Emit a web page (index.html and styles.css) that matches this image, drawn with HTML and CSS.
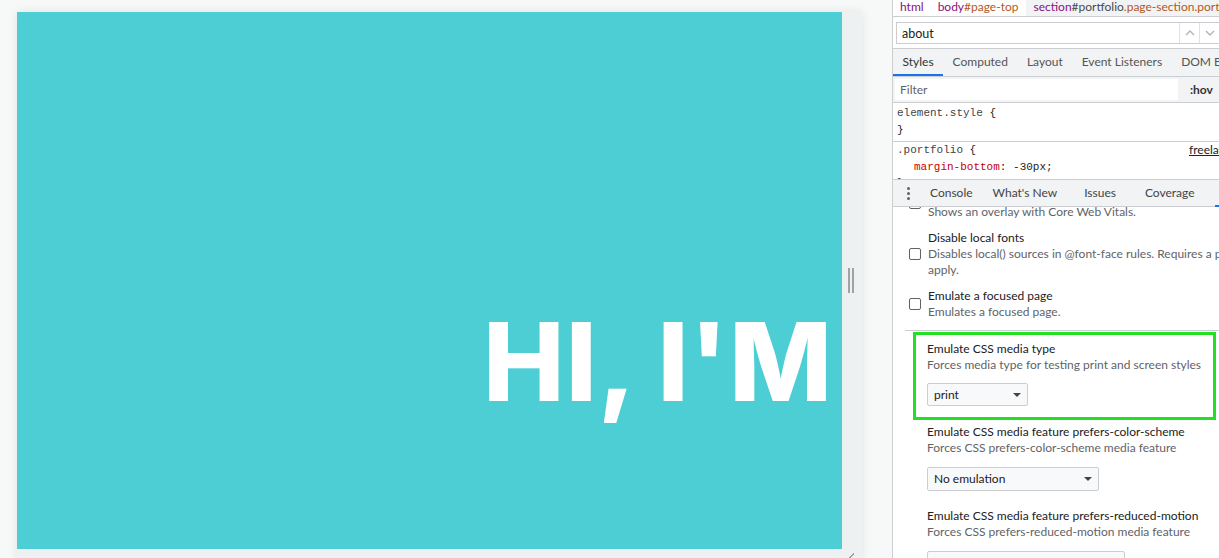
FILE: index.html
```html
<!DOCTYPE html>
<html>
<head>
<meta charset="utf-8">
<link rel="stylesheet" href="styles.css">
</head>
<body>
<div class="app">
  <div class="viewport">
    <div class="device">
      <div class="device-main">
        <div class="page"><h1 class="hero">HI, I'M</h1></div>
        <div class="side-strip"><span class="grip"></span></div>
      </div>
      <div class="bottom-strip"><span class="corner"></span></div>
    </div>
  </div>
  <div class="devtools">
    <div class="crumbs">
      <span class="crumb first"><span class="tag">html</span></span>
      <span class="crumb second"><span class="tag">body</span><span class="idn">#page-top</span></span>
      <span class="crumb selected"><span class="tag">section</span><span class="idsel">#portfolio</span><span class="cls">.page-section.portfolio</span></span>
    </div>
    <div class="search-row">
      <div class="search-box">
        <span class="search-text">about</span>
        <span class="search-btn"><svg width="10" height="6" viewBox="0 0 10 6"><path d="M1 5 L5 1 L9 5" fill="none" stroke="#b0b3b8" stroke-width="1.4"/></svg></span>
        <span class="search-btn"><svg width="10" height="6" viewBox="0 0 10 6"><path d="M1 1 L5 5 L9 1" fill="none" stroke="#b0b3b8" stroke-width="1.4"/></svg></span>
      </div>
    </div>
    <div class="tabs">
      <span class="tab active">Styles</span>
      <span class="tab">Computed</span>
      <span class="tab">Layout</span>
      <span class="tab">Event Listeners</span>
      <span class="tab">DOM Breakpoints</span>
    </div>
    <div class="filter-row">
      <div class="filter-box">Filter</div>
      <span class="hov">:hov</span>
    </div>
    <div class="rule">
      <div class="code"><span class="sel">element.style</span> {</div>
      <div class="code">}</div>
    </div>
    <div class="rule rule-cut">
      <div class="code rule-head"><span><span class="sel">.portfolio</span> {</span><span class="src">freelancer.css</span></div>
      <div class="code indent"><span class="prop">margin-bottom</span>: -30px;</div>
      <div class="code">}</div>
    </div>
    <div class="drawer-bar">
      <span class="kebab"><i></i><i></i><i></i></span>
      <span class="dtab t-console">Console</span>
      <span class="dtab t-new">What's New</span>
      <span class="dtab t-issues">Issues</span>
      <span class="dtab t-coverage">Coverage</span>
      <span class="dtab-active"></span>
    </div>
    <div class="rendering">
      <div class="opt opt-cut">
        <span class="check check-cut"></span>
        <div class="opt-text">
          <div class="desc">Shows an overlay with Core Web Vitals.</div>
        </div>
      </div>
      <div class="opt">
        <span class="check"></span>
        <div class="opt-text">
          <div class="title">Disable local fonts</div>
          <div class="desc">Disables local() sources in @font-face rules. Requires a page reload to<br>apply.</div>
        </div>
      </div>
      <div class="opt">
        <span class="check"></span>
        <div class="opt-text">
          <div class="title">Emulate a focused page</div>
          <div class="desc">Emulates a focused page.</div>
        </div>
      </div>
      <div class="divider"></div>
      <div class="media first-media">
        <div class="title">Emulate CSS media type</div>
        <div class="desc">Forces media type for testing print and screen styles</div>
        <div class="select sel-print">print<span class="arrow"></span></div>
        <div class="highlight"></div>
      </div>
      <div class="media">
        <div class="title">Emulate CSS media feature prefers-color-scheme</div>
        <div class="desc">Forces CSS prefers-color-scheme media feature</div>
        <div class="select sel-scheme">No emulation<span class="arrow"></span></div>
      </div>
      <div class="media">
        <div class="title">Emulate CSS media feature prefers-reduced-motion</div>
        <div class="desc">Forces CSS prefers-reduced-motion media feature</div>
        <div class="select sel-motion">No emulation<span class="arrow"></span></div>
      </div>
    </div>
  </div>
</div>
</body>
</html>
```

FILE: styles.css
```css
* { box-sizing: border-box; }
html, body { margin: 0; padding: 0; }
body {
  width: 1219px;
  height: 558px;
  overflow: hidden;
  font-family: "Lato", "Noto Sans", sans-serif;
  font-size: 12px;
  color: #202124;
}
.app {
  display: flex;
  width: 1219px;
  height: 558px;
  overflow: hidden;
}
.viewport {
  width: 893px;
  flex: none;
  height: 558px;
  background: #f7f8f8;
  border-right: 1px solid #cbcdd1;
  padding: 12px 0 0 17px;
  overflow: hidden;
}
.device {
  width: 845px;
  box-shadow: 0 0 10px rgba(0, 0, 0, 0.09);
  background: #eef1f2;
}
.device-main {
  display: flex;
}
.page {
  width: 825px;
  height: 537px;
  background: #4dced4;
  overflow: hidden;
  padding-top: 295px;
}
.hero {
  margin: 0;
  font-family: "Inter", "Inter Variable", "Noto Sans", sans-serif;
  font-weight: 800;
  font-size: 109px;
  line-height: 1;
  letter-spacing: 1px;
  color: #fff;
  text-align: right;
  padding-right: 9px;
  white-space: nowrap;
}
.side-strip {
  width: 20px;
  height: 537px;
  display: flex;
  justify-content: center;
  padding-top: 256px;
}
.grip {
  width: 6px;
  height: 25px;
  border-left: 2px solid #a0a3a6;
  border-right: 2px solid #a0a3a6;
  margin-left: -2px;
}
.bottom-strip {
  height: 12px;
  display: flex;
  justify-content: flex-end;
  padding: 4px 8px 0 0;
}
.corner {
  width: 6px;
  height: 6px;
  background: linear-gradient(135deg, transparent 45%, #9aa0a6 45%, #9aa0a6 60%, transparent 60%);
}

/* devtools */
.devtools {
  flex: 1;
  min-width: 0;
  height: 558px;
  background: #fff;
  overflow: hidden;
  white-space: nowrap;
}
.crumbs {
  height: 17px;
  border-bottom: 1px solid #cbcdd1;
  display: flex;
  align-items: stretch;
  line-height: 14px;
  font-size: 12px;
}
.crumb {
  padding: 0 8px;
}
.crumb.first { padding-left: 7px; }
.crumb.second { padding-left: 6px; }
.crumb.selected {
  background: #f1f3f4;
  padding-left: 7px;
  flex: 1;
}
.tag { color: #881280; }
.idn { color: #b4581c; }
.idsel { color: #4a4a4a; }
.cls { color: #b4581c; }
.search-row {
  height: 32px;
  border-bottom: 1px solid #cbcdd1;
  padding: 5px 0 0 3px;
}
.search-box {
  height: 22px;
  border: 1px solid #cbcdd1;
  border-right: none;
  display: flex;
  align-items: center;
  padding-left: 5px;
  font-size: 12.5px;
}
.search-text { flex: 1; }
.search-btn {
  width: 20px;
  height: 20px;
  border-left: 1px solid #e0e2e5;
  display: flex;
  align-items: center;
  justify-content: center;
}
.tabs {
  height: 28px;
  background: #f1f3f4;
  border-bottom: 1px solid #cbcdd1;
  display: flex;
}
.tab {
  padding: 0 9.5px;
  line-height: 26px;
  color: #555;
  border-bottom: 2px solid transparent;
}
.tab.active {
  color: #333;
  border-bottom-color: #1a73e8;
}
.filter-row {
  height: 26px;
  background: #f1f3f4;
  border-bottom: 1px solid #cbcdd1;
  display: flex;
  align-items: center;
  padding: 0 0 1px 2px;
}
.filter-box {
  width: 283px;
  height: 21px;
  background: #fff;
  line-height: 21px;
  padding-left: 5px;
  color: #5f6368;
}
.hov {
  margin-left: 12px;
  font-weight: 700;
  color: #333;
}
.rule {
  border-bottom: 1px solid #cbcdd1;
  padding: 2px 0 3px 4px;
}
.rule-cut {
  height: 37px;
  overflow: hidden;
  border-bottom: none;
  padding-top: 0px;
}
.code {
  font-family: "Liberation Mono", "DejaVu Sans Mono", monospace;
  font-size: 11px;
  line-height: 16.5px;
  color: #222;
}
.sel { color: #444; }
.rule-head {
  display: flex;
  justify-content: space-between;
}
.src {
  text-decoration: underline;
  color: #222;
  margin-right: -80px;
  width: 110px;
  font-family: "Lato", sans-serif;
  font-size: 12px;
}
.indent { padding-left: 17px; }
.prop { color: #c80000; }
.drawer-bar {
  height: 28px;
  background: #f1f3f4;
  border-top: 1px solid #cbcdd1;
  border-bottom: 1px solid #cbcdd1;
  display: flex;
  align-items: center;
  position: relative;
}
.kebab {
  width: 16px;
  margin-left: 14px;
  display: flex;
  flex-direction: column;
  gap: 2px;
}
.kebab i {
  width: 3px;
  height: 3px;
  background: #5f6368;
  border-radius: 50%;
}
.dtab {
  color: #444;
  line-height: 22px;
}
.t-console { margin-left: 7px; }
.t-new { margin-left: 20px; }
.t-issues { margin-left: 27px; }
.t-coverage { margin-left: 29px; }
.dtab-active {
  position: absolute;
  right: 0;
  bottom: -1px;
  width: 4px;
  height: 2px;
  background: #1a73e8;
}
.rendering {
  padding-left: 16px;
}
.opt {
  display: flex;
  align-items: center;
  margin-bottom: 10px;
}
.opt-cut {
  margin-top: -3px;
  align-items: flex-start;
}
.check {
  width: 12px;
  height: 12px;
  border: 1px solid #5f6368;
  border-radius: 2px;
  flex: none;
  margin-right: 7px;
}
.check-cut {
  margin-top: -7px;
}
.opt-text {
  white-space: nowrap;
}
.title, .desc {
  line-height: 16px;
}
.title { color: #202124; }
.desc { color: #5f6368; }
.divider {
  height: 1px;
  background: #cbcdd1;
  margin: 0 0 10px -4px;
}
.media {
  position: relative;
  padding-left: 18px;
  margin-bottom: 17px;
}
.first-media {
  margin-bottom: 18px;
}
.select {
  margin-top: 11px;
  height: 24px;
  border: 1px solid #cbcdd1;
  border-radius: 2px;
  background: #f8f9fa;
  padding-left: 6px;
  line-height: 22px;
  color: #202124;
  position: relative;
}
.first-media .select { margin-top: 10px; height: 23px; line-height: 21px; }
.sel-print { width: 101px; }
.sel-scheme { width: 172px; }
.sel-motion { width: 198px; }
.arrow {
  position: absolute;
  right: 6px;
  top: 9px;
  border-left: 4px solid transparent;
  border-right: 4px solid transparent;
  border-top: 4px solid #444;
}
.highlight {
  position: absolute;
  left: 4px;
  top: -9px;
  width: 303px;
  height: 88px;
  border: 3px solid #22e022;
}
```
